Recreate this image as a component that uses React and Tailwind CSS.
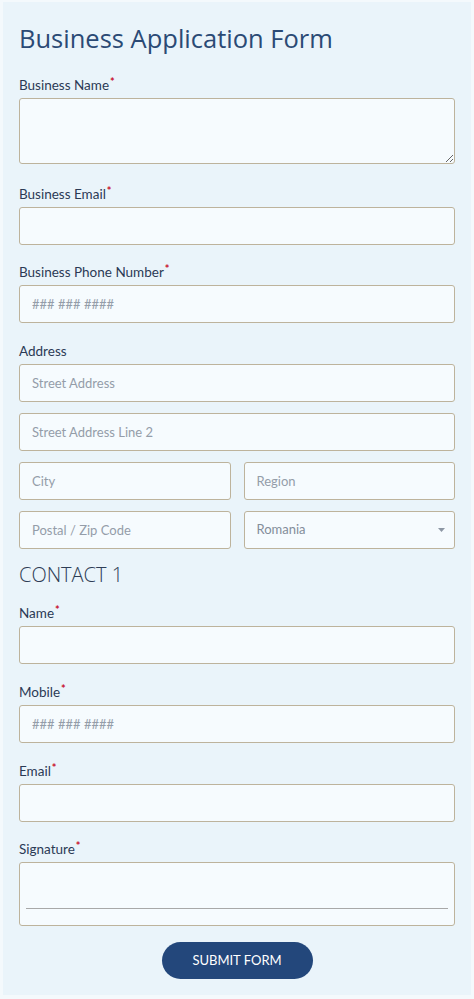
import { useState } from 'react';

const inputCls =
  'block h-[38px] w-full rounded-[3px] border border-[#bdb39c] bg-[#f6fbfe] px-3 text-[13px] text-[#2e3d55] outline-none placeholder:text-[#949da9]';

function Label({ children, required }) {
  return (
    <label className="mb-1 block h-[18px] text-[13.5px] leading-[18px] text-[#2b3a55]">
      {children}
      {required && <span className="relative -top-[4px] ml-[1px] text-[11px] font-bold text-[#c8102e]">*</span>}
    </label>
  );
}

export default function App() {
  const [form, setForm] = useState({ country: 'Romania' });

  function update(field, value) {
    setForm((f) => ({ ...f, [field]: value }));
  }

  return (
    <div className="min-h-[999px] bg-[#f4f9fc] px-[3px] pt-[2px] pb-1 font-['Lato',sans-serif]">
      <form
        onSubmit={(e) => e.preventDefault()}
        className="flex flex-col bg-[#eaf4fa] px-4 pt-5 pb-4"
      >
        <h1 className="mb-[22px] h-8 text-[25.5px] leading-8 text-[#2b4a75] font-['Open_Sans',sans-serif]">
          Business Application Form
        </h1>

        <div className="mb-[21px]">
          <Label required>Business Name</Label>
          <textarea className="block h-[66px] w-full rounded-[3px] border border-[#bdb39c] bg-[#f6fbfe] px-3 py-2 text-[13px] outline-none" />
        </div>

        <div className="mb-[18px]">
          <Label required>Business Email</Label>
          <input type="email" className={inputCls} />
        </div>

        <div className="mb-[19px]">
          <Label required>Business Phone Number</Label>
          <input type="tel" placeholder="### ### ####" className={inputCls} />
        </div>

        <div className="mb-3">
          <Label>Address</Label>
          <div className="flex flex-col gap-[11px]">
            <input placeholder="Street Address" className={inputCls} />
            <input placeholder="Street Address Line 2" className={inputCls} />
            <div className="grid grid-cols-2 gap-[13px]">
              <input placeholder="City" className={inputCls} />
              <input placeholder="Region" className={inputCls} />
            </div>
            <div className="grid grid-cols-2 gap-[13px]">
              <input placeholder="Postal / Zip Code" className={inputCls} />
              <div className="relative">
                <select
                  value={form.country}
                  onChange={(e) => update('country', e.target.value)}
                  className={inputCls + ' appearance-none text-[#838d9a]'}
                >
                  <option>Romania</option>
                  <option>Moldova</option>
                  <option>Hungary</option>
                </select>
                <svg className="pointer-events-none absolute right-[10px] top-[17px]" width="7" height="4" viewBox="0 0 7 4">
                  <path d="M0 0h7L3.5 4z" fill="#8d97a4" />
                </svg>
              </div>
            </div>
          </div>
        </div>

        <h2 className="mb-[15px] h-7 text-[20px] font-light leading-7 text-[#2e3d55] font-['Open_Sans',sans-serif]">CONTACT 1</h2>

        <div className="mb-[19px]">
          <Label required>Name</Label>
          <input className={inputCls} />
        </div>

        <div className="mb-[19px]">
          <Label required>Mobile</Label>
          <input type="tel" placeholder="### ### ####" className={inputCls} />
        </div>

        <div className="mb-[18px]">
          <Label required>Email</Label>
          <input type="email" className={inputCls} />
        </div>

        <div className="mb-4">
          <Label required>Signature</Label>
          <div className="flex h-16 flex-col rounded-[3px] border border-[#bdb39c] bg-[#f6fbfe] px-[6px] pt-[45px]">
            <div className="h-px bg-[#a8a8a8]" />
          </div>
        </div>

        <button
          type="submit"
          className="mx-auto h-[37px] w-[151px] rounded-full bg-[#23477b] text-[13px] text-white"
        >
          SUBMIT FORM
        </button>
      </form>
    </div>
  );
}
